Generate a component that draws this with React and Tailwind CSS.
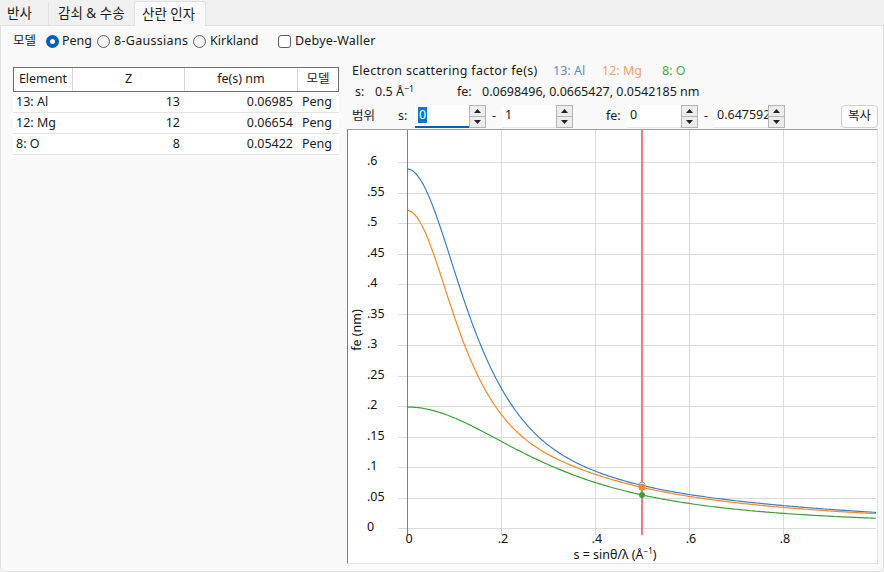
import { useMemo } from 'react'

/* Peng (1996) 5-gaussian electron scattering parameters, values in Å */
const PENG = [
  { key: 'Al', color: '#3f7fc1', a: [0.239, 0.6573, 1.2011, 2.5586, 1.2312], b: [0.3138, 2.1063, 10.4163, 34.4552, 98.5344] },
  { key: 'Mg', color: '#f7882f', a: [0.2314, 0.6866, 0.9677, 2.1882, 1.1339], b: [0.27, 2.47, 10.0, 45.0, 130.0] },
  { key: 'O', color: '#3aa03a', a: [0.0974, 0.2921, 0.691, 0.699, 0.2039], b: [0.2067, 1.3815, 4.6943, 12.7105, 32.4726] },
]

const fe = (p, s) => p.a.reduce((acc, a, i) => acc + a * Math.exp(-p.b[i] * s * s), 0) / 10

/* chart geometry (inner box pixels) */
const W = 528
const H = 432
const px = (s) => 59 + s * 470
const py = (v) => 398 - v * 610

const ROWS = [
  ['13: Al', '13', '0.06985', 'Peng'],
  ['12: Mg', '12', '0.06654', 'Peng'],
  ['8: O', '8', '0.05422', 'Peng'],
]

export default function App() {
  return (
    <div className="w-[884px] h-[572px] bg-[#f0f0f0] flex flex-col text-[12.5px] text-[#1a1a1a] font-['Noto_Sans','Noto_Sans_CJK_KR',sans-serif] overflow-hidden">
      {/* Tabs */}
      <div className="h-[25px] flex items-end shrink-0 text-[13.5px]">
        <div className="w-[49px] h-[23px] pl-[7px] flex items-center border-r border-[#e2e2e2]">반사</div>
        <div className="w-[85px] h-[23px] pl-[9px] flex items-center whitespace-nowrap">감쇠 &amp; 수송</div>
        <div className="w-[72px] h-[25px] pl-[7px] flex items-center whitespace-nowrap bg-[#f9f9f9] border border-b-0 border-[#e0e0e0] rounded-t-[3px] -mb-px relative z-10">산란 인자</div>
      </div>

      {/* Panel */}
      <div className="flex-1 bg-[#f9f9f9] border border-[#e0e0e0] rounded-b-[6px] flex flex-col min-h-0">
        {/* Model row */}
        <div className="h-[30px] flex items-center pl-[12px] shrink-0 whitespace-nowrap">
          <span className="w-[33px]">모델</span>
          <Radio checked />
          <span className="ml-[3px] w-[35px]">Peng</span>
          <Radio />
          <span className="ml-[4px] w-[79px] tracking-[0.3px]">8-Gaussians</span>
          <Radio />
          <span className="ml-[4px] w-[68px]">Kirkland</span>
          <span className="w-[13px] h-[13px] rounded-[3px] border border-[#5d5d5d] bg-white"></span>
          <span className="ml-[4px] tracking-[0.2px]">Debye-Waller</span>
        </div>

        {/* Body */}
        <div className="flex-1 flex min-h-0">
          {/* Table */}
          <div className="w-[346px] pl-[12px] pt-[11px] shrink-0">
            <div className="w-[326px]">
              <div className="h-[25px] flex bg-white border border-[#6e6e6e]">
                <div className="w-[59px] flex items-center justify-center border-r border-[#d4d4d4]">Element</div>
                <div className="w-[112px] flex items-center justify-center border-r border-[#d4d4d4]">Z</div>
                <div className="w-[113px] flex items-center justify-center border-r border-[#d4d4d4]">fe(s) nm</div>
                <div className="flex-1 flex items-center justify-center">모델</div>
              </div>
              {ROWS.map((r) => (
                <div key={r[0]} className="h-[21px] flex bg-white border-b border-[#e3e3e3]">
                  <div className="w-[60px] pl-[3px] flex items-center">{r[0]}</div>
                  <div className="w-[112px] pr-[5px] flex items-center justify-end">{r[1]}</div>
                  <div className="w-[113px] pr-[5px] flex items-center justify-end">{r[2]}</div>
                  <div className="flex-1 pl-[4px] flex items-center">{r[3]}</div>
                </div>
              ))}
            </div>
          </div>

          {/* Chart column */}
          <div className="flex-1 flex flex-col pr-[5px] pb-[7px] min-w-0">
            <div className="h-[26px] pt-[5px] pl-[5px] flex items-center shrink-0 whitespace-nowrap">
              <span className="w-[201px] tracking-[0.3px]">Electron scattering factor fe(s)</span>
              <span className="w-[49px] text-[#5c8fc2]">13: Al</span>
              <span className="w-[60px] text-[#f5a06a]">12: Mg</span>
              <span className="text-[#4cac4c]">8: O</span>
            </div>
            <div className="h-[21px] pl-[8px] flex items-center shrink-0 whitespace-nowrap">
              <span className="w-[20px]">s:</span>
              <span className="w-[82px]">0.5 Å<sup className="text-[9px]">−1</sup></span>
              <span className="w-[25px]">fe:</span>
              <span>0.0698496, 0.0665427, 0.0542185 nm</span>
            </div>
            <div className="h-[26px] pl-[5px] flex items-center shrink-0 whitespace-nowrap">
              <span className="w-[46px]">범위</span>
              <span className="w-[17px]">s:</span>
              <Spin value="0" focused />
              <span className="w-[16px] text-center">-</span>
              <Spin value="1" />
              <span className="ml-[33px] w-[21px]">fe:</span>
              <Spin value="0" />
              <span className="w-[16px] text-center">-</span>
              <Spin value="0.647592" />
              <button className="ml-auto w-[37px] h-[23px] rounded-[4px] border border-[#cfcfcf] bg-[#fdfdfd] flex items-center justify-center">복사</button>
            </div>
            <div className="flex-1 border border-t-[#a0a0a0] border-l-[#808080] border-r-[#e3e3e3] border-b-[#e3e3e3] bg-white overflow-hidden">
              <Chart />
            </div>
          </div>
        </div>
      </div>
    </div>
  )
}

function Radio({ checked }) {
  return checked ? (
    <span className="w-[13px] h-[13px] shrink-0 rounded-full bg-[#005fb8] flex items-center justify-center">
      <span className="w-[5px] h-[5px] rounded-full bg-white"></span>
    </span>
  ) : (
    <span className="w-[13px] h-[13px] shrink-0 rounded-full border border-[#5d5d5d] bg-[#f6f6f6]"></span>
  )
}

function Spin({ value, focused }) {
  return (
    <div className="flex h-[23px] shrink-0">
      <div className={`w-[54px] h-[23px] bg-white pl-[3px] flex items-center overflow-hidden whitespace-nowrap ${focused ? 'border-b-2 border-[#005fb8]' : 'border-b border-[#e8e8e8]'}`}>
        {focused ? <span className="bg-[#0078d7] text-white px-px leading-[16px]">{value}</span> : value}
      </div>
      <div className="w-[17px] flex flex-col border border-[#b5b5b5] bg-[#ececec]">
        <div className="flex-1 flex items-center justify-center border-b border-[#b5b5b5]">
          <svg width="7" height="4" viewBox="0 0 7 4"><polygon points="0,4 7,4 3.5,0" fill="#222" /></svg>
        </div>
        <div className="flex-1 flex items-center justify-center">
          <svg width="7" height="4" viewBox="0 0 7 4"><polygon points="0,0 7,0 3.5,4" fill="#222" /></svg>
        </div>
      </div>
    </div>
  )
}

function Chart() {
  const paths = useMemo(
    () =>
      PENG.map((p) => {
        let d = ''
        for (let i = 0; i <= 260; i++) {
          const s = i / 250
          d += (i ? 'L' : 'M') + px(s).toFixed(2) + ',' + py(fe(p, s)).toFixed(2)
        }
        return { ...p, d }
      }),
    []
  )
  const yTicks = Array.from({ length: 13 }, (_, i) => i * 0.05)
  const yLabel = (v) => (v === 0 ? '0' : v.toFixed(2).replace(/^0/, '').replace(/0$/, ''))

  return (
    <svg width={W} height={H} viewBox={`0 0 ${W} ${H}`} className="block" fontFamily="Noto Sans, sans-serif">
      {yTicks.map((v) => (
        <g key={v}>
          <line x1={50} x2={W} y1={Math.round(py(v)) + 0.5} y2={Math.round(py(v)) + 0.5} stroke="#dadada" />
          <text x={19} y={py(v)} dominantBaseline="middle" fontSize="12.5" fill="#111">{yLabel(v)}</text>
        </g>
      ))}
      {[0.2, 0.4, 0.6, 0.8].map((s) => (
        <g key={s}>
          <line x1={Math.round(px(s)) + 0.5} x2={Math.round(px(s)) + 0.5} y1={0} y2={405} stroke="#dadada" />
          <text x={px(s) + 2} y={410} textAnchor="middle" dominantBaseline="middle" fontSize="12.5" fill="#111">{'.' + Math.round(s * 10)}</text>
        </g>
      ))}
      <line x1={59.5} x2={59.5} y1={0} y2={405} stroke="#808080" />
      <text x={61} y={410} textAnchor="middle" dominantBaseline="middle" fontSize="12.5" fill="#111">0</text>

      {paths.map((p) => (
        <path key={p.key} d={p.d} fill="none" stroke={p.color} strokeWidth="1.2" />
      ))}

      <line x1={px(0.5)} x2={px(0.5)} y1={0} y2={405} stroke="#f27b7b" strokeWidth="2" />
      <circle cx={px(0.5)} cy={py(fe(PENG[0], 0.5))} r="3.3" fill="#dce8f6" stroke="#6f9fd0" />
      <circle cx={px(0.5)} cy={py(fe(PENG[1], 0.5))} r="3.5" fill="#f7882f" />
      <circle cx={px(0.5)} cy={py(fe(PENG[2], 0.5))} r="3" fill="#3aa03a" />

      <text x={267} y={426} textAnchor="middle" dominantBaseline="middle" fontSize="12.5" fill="#111">
        s = sinθ/λ (Å<tspan fontSize="8" dy="-4">−1</tspan><tspan dy="4">)</tspan>
      </text>
      <text transform="translate(10,200) rotate(-90)" textAnchor="middle" dominantBaseline="middle" fontSize="12.5" fill="#111">fe (nm)</text>
    </svg>
  )
}
